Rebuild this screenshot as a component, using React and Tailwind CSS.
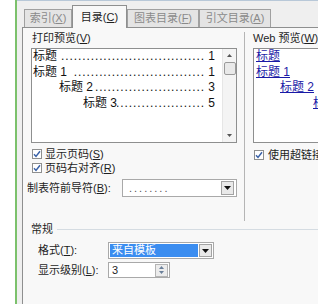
import React from "react";

function Check() {
  return (
    <span className="flex h-[10px] w-[10px] shrink-0 items-center justify-center border border-[#8e8f8f] bg-white">
      <svg width="8" height="8" viewBox="0 0 8 8">
        <path d="M1 4.2 L3 6.4 L7 1.2" stroke="#3a62a8" strokeWidth="1.5" fill="none" />
      </svg>
    </span>
  );
}

function DropBtn() {
  return (
    <span className="flex h-full w-[13px] shrink-0 items-center justify-center border border-[#a3a3a3] bg-[#e9e9e9]">
      <svg width="7" height="4" viewBox="0 0 7 4">
        <path d="M0 0 L7 0 L3.5 4 Z" fill="#111" />
      </svg>
    </span>
  );
}

function Key({ k }) {
  return (
    <>
      (<span className="underline">{k}</span>)
    </>
  );
}

function TocLine({ indent, title, page, dots }) {
  return (
    <div className={`flex min-w-0 items-center ${indent}`}>
      <span className="shrink-0 whitespace-pre">{title}</span>
      <span className="flex min-w-0 flex-1 justify-end overflow-hidden whitespace-nowrap tracking-[0.9px]">
        {".".repeat(dots)}
      </span>
      <span className="w-[10px] shrink-0 text-right">{page}</span>
    </div>
  );
}

function Tab({ label, k, active }) {
  if (active) {
    return (
      <div className="relative z-10 -mb-px flex h-[23px] w-[55px] items-center justify-center border border-b-0 border-[#8e8f8f] bg-[#f8f8f8] text-[11px] text-[#1e1e1e]">
        {label}
        <Key k={k} />
      </div>
    );
  }
  return (
    <div className="flex h-[18px] items-center justify-center border border-b-0 border-[#a0a0a0] bg-[#e4e4e4] text-[11px] text-[#8a8a8a]">
      {label}
      <Key k={k} />
    </div>
  );
}

export default function App() {
  return (
    <div className="flex h-[304px] w-[318px] overflow-hidden bg-white font-['Liberation_Sans','Noto_Sans_CJK_SC',sans-serif] text-[11px] leading-[13px] text-[#1e1e1e]">
      <div className="w-[15px] shrink-0 bg-white" />
      <div className="w-[2px] shrink-0 bg-[#7cc16c]" />
      <div className="flex min-w-0 flex-1 flex-col border-t border-[#b8c8d8] bg-[#efefef] pl-[5px]">
        {/* tabs */}
        <div className="flex h-[26px] shrink-0 items-end pl-[2px]">
          <div className="w-[48px]">
            <Tab label="索引" k="X" />
          </div>
          <Tab label="目录" k="C" active />
          <div className="w-[72px]">
            <Tab label="图表目录" k="F" />
          </div>
          <div className="w-[72px]">
            <Tab label="引文目录" k="A" />
          </div>
        </div>

        {/* panel */}
        <div className="flex min-w-0 flex-1 flex-col border-l border-t border-[#8e8f8f] bg-[#f8f8f8]">
          <div className="flex min-w-0">
            {/* left column */}
            <div className="w-[222px] shrink-0 pt-[4px]">
              <div className="flex h-[189px] flex-col border-r border-[#b5b5b5] pl-[8px] pr-[7px]">
                <div className="pl-[1px] text-[11px] leading-[13px]">
                  打印预览<Key k="V" />
                </div>
                <div className="mt-[3px] flex h-[95px] min-w-0 overflow-hidden border border-[#8e8f8f] bg-white">
                  <div className="min-w-0 flex-1 overflow-hidden pl-[1px] pr-[7px] text-[12px] leading-[15.5px] text-[#111]">
                    <TocLine indent="" title="标题" page="1" dots={34} />
                    <TocLine indent="" title="标题 1" page="1" dots={31} />
                    <TocLine indent="pl-[26px]" title="标题 2" page="3" dots={26} />
                    <TocLine indent="pl-[50px]" title="标题 3" page="5" dots={21} />
                  </div>
                  <div className="flex w-[14px] shrink-0 flex-col items-center border-l border-[#e6e6e6] bg-[#f4f4f4]">
                    <svg className="mt-[5px]" width="5" height="3" viewBox="0 0 5 3">
                      <path d="M0 3 L5 3 L2.5 0 Z" fill="#555" />
                    </svg>
                    <div className="mt-[5px] h-[13px] w-[12px] rounded-[2px] border border-[#9a9a9a] bg-[#e9e9e9]" />
                    <div className="flex-1" />
                    <svg className="mb-[5px]" width="5" height="3" viewBox="0 0 5 3">
                      <path d="M0 0 L5 0 L2.5 3 Z" fill="#555" />
                    </svg>
                  </div>
                </div>
                <div className="mt-[4px] flex h-[14px] items-center gap-[3px] pl-[1px]">
                  <Check />
                  <span>
                    显示页码<Key k="S" />
                  </span>
                </div>
                <div className="flex h-[14px] items-center gap-[3px] pl-[1px]">
                  <Check />
                  <span>
                    页码右对齐<Key k="R" />
                  </span>
                </div>
                <div className="mt-[4px] flex h-[18px] items-center">
                  <span className="-ml-[4px] w-[95px] shrink-0">
                    制表符前导符<Key k="B" />:
                  </span>
                  <div className="flex h-full flex-1 items-center border border-[#a9a9a9] bg-white pl-[6px]">
                    <span className="flex-1 tracking-[2px] text-[#555]">........</span>
                    <div className="h-[14px] pr-[2px]">
                      <DropBtn />
                    </div>
                  </div>
                </div>
              </div>
            </div>

            {/* right column */}
            <div className="min-w-0 flex-1 overflow-hidden pl-[8px] pt-[4px]">
              <div className="whitespace-nowrap text-[11px] leading-[13px]">
                Web 预览<Key k="W" />
              </div>
              <div className="mt-[3px] h-[95px] w-[80px] whitespace-nowrap border border-r-0 border-[#8e8f8f] bg-white pl-[2px] text-[12px] leading-[15.5px] text-[#1a1aa6]">
                <div className="underline">标题</div>
                <div className="whitespace-pre underline">标题 1</div>
                <div className="whitespace-pre pl-[24px] underline">标题 2</div>
                <div className="whitespace-pre pl-[57px] underline">标题 3</div>
              </div>
              <div className="mt-[5px] flex h-[14px] items-center gap-[4px] whitespace-nowrap pl-[1px]">
                <Check />
                <span>使用超链接而不使用页码</span>
              </div>
            </div>
          </div>

          {/* general */}
          <div className="mt-[2px] flex items-center pl-[8px]">
            <span className="text-[11px] leading-[13px]">常规</span>
            <div className="ml-[4px] h-px flex-1 bg-[#d5dce2]" />
          </div>
          <div className="mt-[6px] flex h-[17px] items-center pl-[15px]">
            <span className="w-[70px] shrink-0">
              格式<Key k="T" />:
            </span>
            <div className="flex h-full w-[106px] items-center border border-[#a9a9a9] bg-white p-[1px]">
              <span className="flex h-full flex-1 items-center bg-[#3b8df0] pl-[2px] text-white">来自模板</span>
              <div className="ml-[1px] h-full">
                <DropBtn />
              </div>
            </div>
          </div>
          <div className="mt-[3px] flex h-[16px] items-center pl-[15px]">
            <span className="w-[70px] shrink-0">
              显示级别<Key k="L" />:
            </span>
            <div className="flex h-full w-[62px] items-center border border-[#a9a9a9] bg-white">
              <span className="flex-1 pl-[3px]">3</span>
              <div className="mr-px flex h-[13px] w-[13px] flex-col items-center justify-center gap-[2px] border border-[#b4b4b4] bg-[#ececec]">
                <svg width="5" height="3" viewBox="0 0 5 3">
                  <path d="M0 3 L5 3 L2.5 0 Z" fill="#6a7f99" />
                </svg>
                <svg width="5" height="3" viewBox="0 0 5 3">
                  <path d="M0 0 L5 0 L2.5 3 Z" fill="#6a7f99" />
                </svg>
              </div>
            </div>
          </div>
        </div>
      </div>
    </div>
  );
}
